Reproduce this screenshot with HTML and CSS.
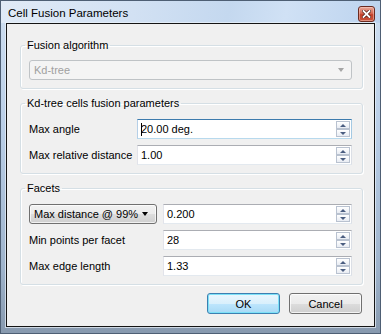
FILE: index.html
```html
<!DOCTYPE html>
<html lang="en">
<head>
  <meta charset="UTF-8"/>
  <title>Cell Fusion Parameters</title>
  <link rel="stylesheet" href="styles.css">
</head>
<body>

  <div class="window">
    <div class="titlebar">
      <span class="title">Cell Fusion Parameters</span>
      <button class="close-btn" aria-label="Close">
        <svg viewBox="0 0 9 8" width="9" height="8">
          <path d="M1.5 1 L7.5 7 M7.5 1 L1.5 7" stroke="#4a1a12" stroke-width="3.2" stroke-linecap="square"/>
          <path d="M1.5 1 L7.5 7 M7.5 1 L1.5 7" stroke="#fff" stroke-width="1.8" stroke-linecap="square"/>
        </svg>
      </button>
    </div>

    <div class="client">
      <fieldset class="group first">
        <legend>Fusion algorithm</legend>
        <div class="combo disabled">
          <span>Kd-tree</span>
          <i class="arrow"></i>
        </div>
      </fieldset>

      <fieldset class="group">
        <legend>Kd-tree cells fusion parameters</legend>
        <div class="rows kd">
          <label>Max angle</label>
          <div class="spin focus">
            <span class="value"><span class="caret"></span>20.00 deg.</span>
            <div class="spin-btns"><span class="up"></span><span class="down"></span></div>
          </div>
          <label>Max relative distance</label>
          <div class="spin">
            <span class="value">1.00</span>
            <div class="spin-btns"><span class="up"></span><span class="down"></span></div>
          </div>
        </div>
      </fieldset>

      <fieldset class="group">
        <legend>Facets</legend>
        <div class="rows facets">
          <div class="combo button">
            <span>Max distance @ 99%</span>
            <i class="arrow"></i>
          </div>
          <div class="spin">
            <span class="value">0.200</span>
            <div class="spin-btns"><span class="up"></span><span class="down"></span></div>
          </div>
          <label>Min points per facet</label>
          <div class="spin">
            <span class="value">28</span>
            <div class="spin-btns"><span class="up"></span><span class="down"></span></div>
          </div>
          <label>Max edge length</label>
          <div class="spin">
            <span class="value">1.33</span>
            <div class="spin-btns"><span class="up"></span><span class="down"></span></div>
          </div>
        </div>
      </fieldset>

      <div class="buttons">
        <button class="btn default">OK</button>
        <button class="btn">Cancel</button>
      </div>
    </div>
  </div>

</body>
</html>
```

FILE: styles.css
```css
:root {
  --face:      #f0f0f0;
  --fg:        #000000;
  --muted:     #9a9a9a;
  --group:     #d5dfe5;
  --font:      "Liberation Sans", Arial, sans-serif;
}
*,*::before,*::after { box-sizing:border-box; margin:0; padding:0 }
body {
  width: 381px;
  height: 334px;
  font-family: var(--font);
  font-size: 11px;
  color: var(--fg);
  background: #b9cde4;
  white-space: nowrap;
}
.window {
  width: 381px;
  height: 334px;
  display: flex;
  flex-direction: column;
  border: 1px solid #4e5f74;
  background: linear-gradient(180deg, #cfdff1 0%, #b8cde6 40%, #9fb4cc 80%, #8799ae 100%);
}
.titlebar {
  height: 22px;
  display: flex;
  align-items: center;
  justify-content: space-between;
  padding: 0 5px 0 7px;
  background: linear-gradient(100deg, #e0eaf6 0%, #d2e1f3 35%, #c4d8ef 60%, #d0e1f5 75%, #bcd3ee 100%);
}
.title {
  font-size: 11.5px;
  color: #000;
  margin-top: 2px;
}
.close-btn {
  width: 17px; height: 16px;
  margin-top: 3px;
  border: 1px solid #6b2a20;
  border-radius: 3px;
  background: linear-gradient(180deg, #e9a899 0%, #d66a55 45%, #c2412b 55%, #c9543c 100%);
  box-shadow: inset 0 0 0 1px rgba(255,220,210,.45);
  display: flex; align-items: center; justify-content: center;
}
.client {
  flex: 1;
  margin: 0 5px 6px 5px;
  border: 1px solid #141414;
  box-shadow: 0 0 0 1px rgba(235,242,250,.7);
  background: var(--face);
  padding: 14px 11px 12px 13px;
  display: flex;
  flex-direction: column;
  gap: 7px;
}
.group {
  border: 1px solid var(--group);
  border-radius: 3px;
  box-shadow: inset 1px 1px 0 #fff, 1px 1px 0 #fff;
  padding: 9px 10px 8px 8px;
}
.group.first { padding-top: 8px; }
.group legend {
  margin-left: -4px;
  padding: 0 2px;
  line-height: 14px;
}
.rows {
  display: grid;
  row-gap: 6px;
  align-items: center;
}
.rows.kd { grid-template-columns: 108px 1fr; }
.rows.facets { grid-template-columns: 128px 1fr; column-gap: 6px; }
.rows.facets .spin:first-of-type { margin-top: 1px; }

/* combo boxes */
.combo {
  height: 20px;
  display: flex;
  align-items: center;
  justify-content: space-between;
  padding: 0 7px 0 4px;
  border-radius: 3px;
}
.combo .arrow {
  width: 0; height: 0;
  border-left: 3.5px solid transparent;
  border-right: 3.5px solid transparent;
  border-top: 4px solid #000;
}
.combo.disabled {
  border: 1px solid #bfc3c6;
  background: #f4f4f4;
  color: #a0a0a0;
}
.combo.disabled .arrow { border-top-color: #a5a5a5; }
.combo.button {
  border: 1px solid #707070;
  background: linear-gradient(180deg, #f2f2f2 0%, #ebebeb 50%, #dddddd 51%, #cfcfcf 100%);
  box-shadow: inset 0 0 0 1px rgba(255,255,255,.7);
  padding-right: 8px;
}

/* spin boxes */
.spin {
  height: 20px;
  display: flex;
  align-items: center;
  justify-content: space-between;
  background: #fff;
  border: 1px solid;
  border-color: #abadb3 #dbdfe6 #e3e9ef #e2e3ea;
  padding: 0 1px 0 3px;
}
.spin.focus {
  border-color: #3d7bad #a4c9e3 #b7d9ed #b5cfe7;
}
.value { display: flex; align-items: center; }
.caret {
  display: inline-block;
  width: 1px; height: 13px;
  background: #000;
  margin-right: -1px;
}
.spin-btns {
  display: flex;
  flex-direction: column;
}
.spin-btns span {
  width: 14px; height: 8px;
  border: 1px solid #b9c2d0;
  background: linear-gradient(180deg, #ffffff 0%, #e8ecf3 100%);
  display: flex; align-items: center; justify-content: center;
}
.spin-btns span::after {
  content: "";
  width: 0; height: 0;
  border-left: 3px solid transparent;
  border-right: 3px solid transparent;
}
.spin-btns .up::after { border-bottom: 3px solid #4a5d80; }
.spin-btns .down::after { border-top: 3px solid #4a5d80; }

/* dialog buttons */
.buttons {
  margin-top: 1px;
  display: flex;
  justify-content: flex-end;
  gap: 9px;
  padding-right: 1px;
}
.btn {
  width: 73px; height: 21px;
  font-family: var(--font);
  font-size: 11px;
  color: #000;
  border: 1px solid #707070;
  border-radius: 3px;
  background: linear-gradient(180deg, #f2f2f2 0%, #ebebeb 50%, #dddddd 51%, #cfcfcf 100%);
  box-shadow: inset 0 0 0 1px rgba(255,255,255,.75);
}
.btn.default {
  border-color: #3c7fb1;
  background: linear-gradient(180deg, #eaf6fd 0%, #d9f0fc 50%, #bee6fd 51%, #a7d9f5 100%);
  box-shadow: inset 0 0 0 1px #7de1f7;
}
```
